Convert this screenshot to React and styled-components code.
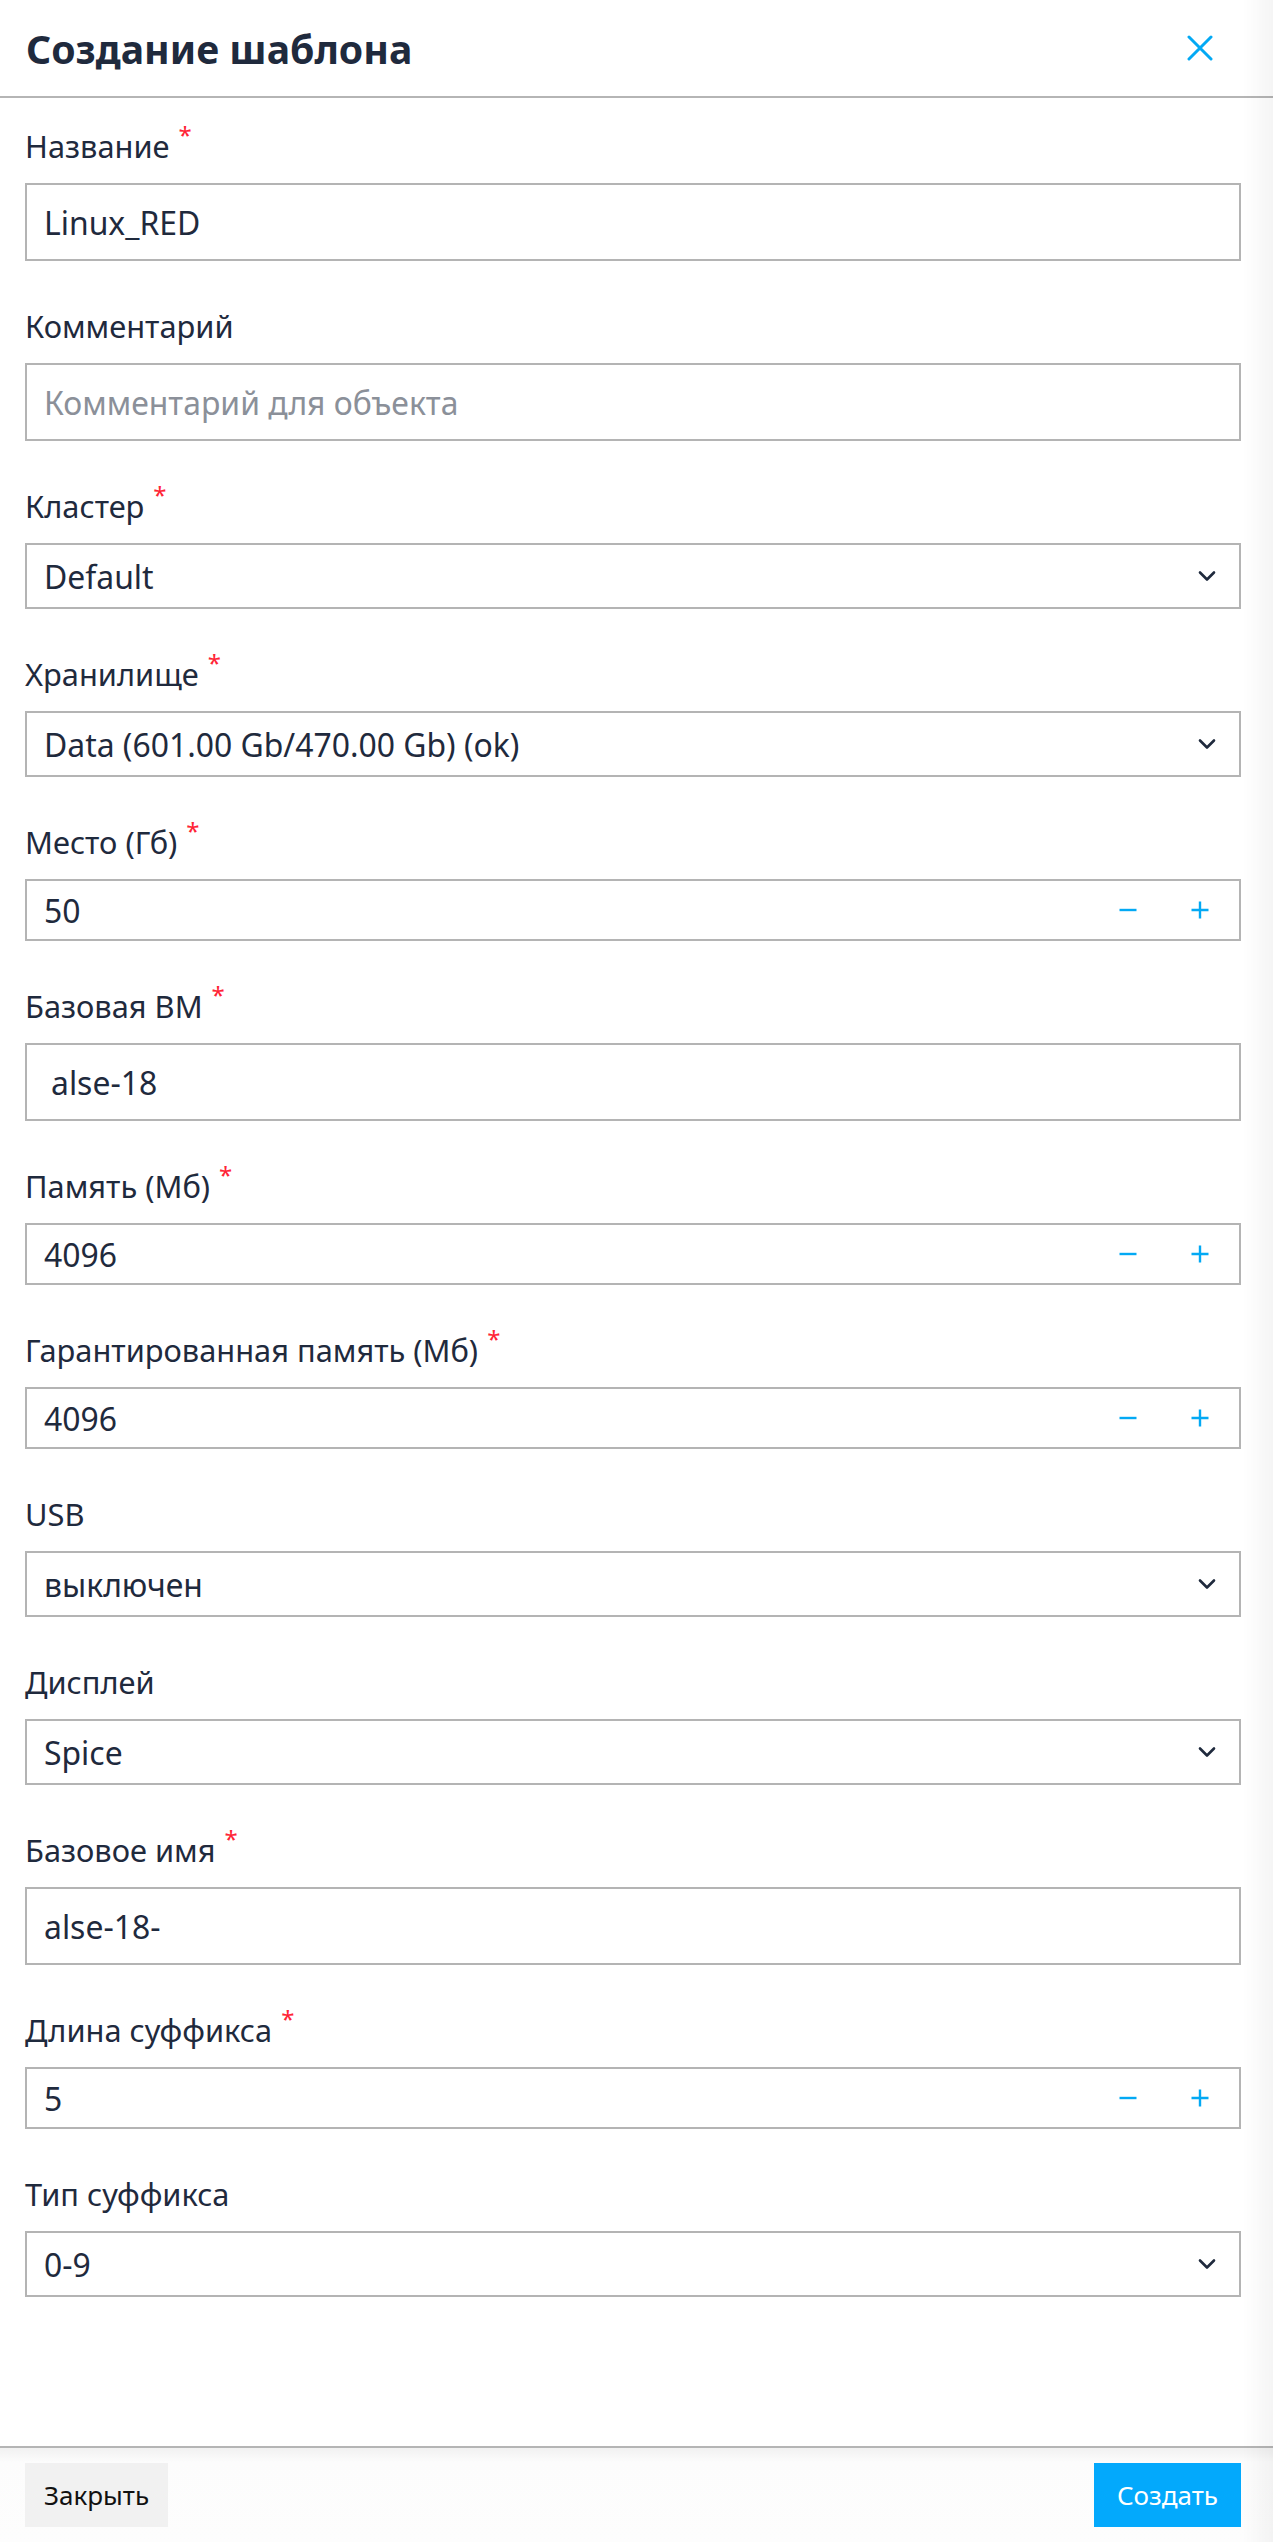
import React from 'react';
import styled, { createGlobalStyle } from 'styled-components';

const GlobalStyle = createGlobalStyle`
  html, body {
    margin: 0;
    padding: 0;
    background: #ffffff;
  }
  body {
    font-family: "Noto Sans", "Open Sans", sans-serif;
    color: #1f2a3d;
  }
  * { box-sizing: border-box; }
`

const Drawer = styled.div`
  display: flex;
  flex-direction: column;
  height: 100vh;
  background: #ffffff;
`

const Header = styled.div`
  display: flex;
  align-items: center;
  justify-content: space-between;
  height: 98px;
  padding: 0 60px 0 26px;
  border-bottom: 2px solid #b5b5b5;
  flex-shrink: 0;
`

const Title = styled.h2`
  margin: 0;
  font-size: 39.2px;
  font-weight: 700;
  color: #1f2a3d;
`

const CloseButton = styled.button`
  display: flex;
  align-items: center;
  justify-content: center;
  width: 26px;
  height: 26px;
  padding: 0;
  border: none;
  background: none;
  cursor: pointer;
`

const Body = styled.div`
  flex: 1;
  padding: 27px 32px 0 25px;
`

const Field = styled.div`
  margin-bottom: 44px;
`

const Label = styled.div`
  display: flex;
  align-items: flex-start;
  height: 42px;
  font-size: 30.8px;
  line-height: 42px;
  color: #1f2a3d;
  margin-bottom: 16px;
  white-space: nowrap;
`

const Star = styled.span`
  margin-left: 9px;
  margin-top: -2px;
  font-size: 24px;
  line-height: 24px;
  color: #ff2436;
`

const Box = styled.div`
  display: flex;
  align-items: center;
  height: ${p => p.$h}px;
  border: 2px solid #b4b4b4;
  background: #ffffff;
  padding-left: ${p => p.$indent ? 24 : 17}px;
  padding-right: ${p => p.$pr || 0}px;
`

const Value = styled.div`
  flex: 1;
  font-size: 31.9px;
  color: ${p => p.$placeholder ? '#8b9099' : '#1f2a3d'};
  white-space: nowrap;
`

const Chevron = styled.div`
  display: flex;
  align-items: center;
  justify-content: center;
  width: 20px;
  margin-right: 22px;
`

const StepButton = styled.button`
  display: flex;
  align-items: center;
  justify-content: center;
  width: 72px;
  height: 100%;
  padding: 0;
  border: none;
  background: none;
  cursor: pointer;
`

const Footer = styled.div`
  display: flex;
  align-items: center;
  justify-content: space-between;
  height: 96px;
  padding: 0 32px 0 25px;
  border-top: 2px solid #b5b5b5;
  background: linear-gradient(#f1f1f1, #fcfcfc 14px, #fdfdfd);
  flex-shrink: 0;
`

const Button = styled.button`
  height: 64px;
  padding: 0 ${p => p.$primary ? 23 : 19}px;
  border: none;
  font-family: "Noto Sans", sans-serif;
  font-size: 26px;
  color: ${p => p.$primary ? '#ffffff' : '#111111'};
  background: ${p => p.$primary ? '#03a9fc' : '#f1f1f1'};
  cursor: pointer;
`

const EdgeShade = styled.div`
  position: fixed;
  top: 0;
  right: 0;
  bottom: 0;
  width: 30px;
  pointer-events: none;
  background: linear-gradient(to right, rgba(0, 0, 0, 0), rgba(0, 0, 0, 0.04));
`

const XIcon = () => (
  <svg width="26" height="26" viewBox="0 0 26 26">
    <path d="M2 2 L24 24 M24 2 L2 24" stroke="#03a9f4" strokeWidth="3" strokeLinecap="round" />
  </svg>
)

const ChevronIcon = () => (
  <svg width="18" height="12" viewBox="0 0 18 12">
    <path d="M2 2.5 L9 9.5 L16 2.5" fill="none" stroke="#1f2a3d" strokeWidth="2.6" strokeLinecap="round" strokeLinejoin="round" />
  </svg>
)

const MinusIcon = () => (
  <svg width="18" height="18" viewBox="0 0 18 18">
    <path d="M0.5 9 H17.5" stroke="#03a9f4" strokeWidth="2.4" />
  </svg>
)

const PlusIcon = () => (
  <svg width="18" height="18" viewBox="0 0 18 18">
    <path d="M0.5 9 H17.5 M9 0.5 V17.5" stroke="#03a9f4" strokeWidth="2.4" />
  </svg>
)

const FieldLabel = ({ children, required }) => (
  <Label>
    {children}
    {required && <Star>*</Star>}
  </Label>
)

const TextField = ({ label, required, value, placeholder, indent }) => (
  <Field>
    <FieldLabel required={required}>{label}</FieldLabel>
    <Box $h={78} $indent={indent}>
      <Value $placeholder={!value}>{value || placeholder}</Value>
    </Box>
  </Field>
)

const SelectField = ({ label, required, value }) => (
  <Field>
    <FieldLabel required={required}>{label}</FieldLabel>
    <Box $h={66}>
      <Value>{value}</Value>
      <Chevron><ChevronIcon /></Chevron>
    </Box>
  </Field>
)

const NumberField = ({ label, required, value }) => (
  <Field>
    <FieldLabel required={required}>{label}</FieldLabel>
    <Box $h={62} $pr={3}>
      <Value>{value}</Value>
      <StepButton><MinusIcon /></StepButton>
      <StepButton><PlusIcon /></StepButton>
    </Box>
  </Field>
)

export default function App() {
  return (
    <>
      <GlobalStyle />
      <Drawer>
        <Header>
          <Title>Создание шаблона</Title>
          <CloseButton><XIcon /></CloseButton>
        </Header>
        <Body>
          <TextField label="Название" required value="Linux_RED" />
          <TextField label="Комментарий" placeholder="Комментарий для объекта" />
          <SelectField label="Кластер" required value="Default" />
          <SelectField label="Хранилище" required value="Data (601.00 Gb/470.00 Gb) (ok)" />
          <NumberField label="Место (Гб)" required value="50" />
          <TextField label="Базовая ВМ" required value="alse-18" indent />
          <NumberField label="Память (Мб)" required value="4096" />
          <NumberField label="Гарантированная память (Мб)" required value="4096" />
          <SelectField label="USB" value="выключен" />
          <SelectField label="Дисплей" value="Spice" />
          <TextField label="Базовое имя" required value="alse-18-" />
          <NumberField label="Длина суффикса" required value="5" />
          <SelectField label="Тип суффикса" value="0-9" />
        </Body>
        <Footer>
          <Button>Закрыть</Button>
          <Button $primary>Создать</Button>
        </Footer>
      </Drawer>
      <EdgeShade />
    </>
  )
}
